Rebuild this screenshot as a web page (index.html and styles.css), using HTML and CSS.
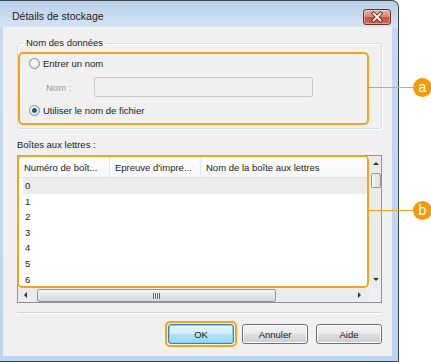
FILE: index.html
```html
<!DOCTYPE html>
<html lang="fr">
<head>
  <meta charset="UTF-8">
  <title>Détails de stockage</title>
  <link rel="stylesheet" href="styles.css">
</head>
<body>

<div class="window">
  <div class="titlebar">
    <span class="title">Détails de stockage</span>
    <button class="close" aria-label="Fermer">
      <svg width="26" height="14" viewBox="0 0 26 14">
        <path d="M9.5 3.5l7 7m0-7l-7 7" stroke="#5a2a22" stroke-width="3.6" stroke-linecap="square" fill="none"/>
        <path d="M9.5 3.5l7 7m0-7l-7 7" stroke="#ffffff" stroke-width="1.8" stroke-linecap="square" fill="none"/>
      </svg>
    </button>
  </div>

  <div class="client">
    <fieldset class="group">
      <legend>Nom des données</legend>
      <div class="callout name-options">
        <div class="option"><span class="radio"></span>Entrer un nom</div>
        <div class="name-row">
          <span class="name-label">Nom :</span>
          <span class="edit"></span>
        </div>
        <div class="option"><span class="radio checked"></span>Utiliser le nom de fichier</div>
      </div>
    </fieldset>

    <div class="list-label">Boîtes aux lettres :</div>

    <div class="listview">
      <div class="list-body callout">
        <div class="list-head">
          <span class="col col-num">Numéro de boît...</span>
          <span class="col col-proof">Epreuve d'impre...</span>
          <span class="col col-name">Nom de la boîte aux lettres</span>
        </div>
        <ul class="rows">
          <li class="hot">0</li>
          <li>1</li>
          <li>2</li>
          <li>3</li>
          <li>4</li>
          <li>5</li>
          <li>6</li>
        </ul>
      </div>
      <div class="vscroll">
        <span class="arrow"><i class="tri up"></i></span>
        <span class="thumb"></span>
        <span class="arrow bottom"><i class="tri down"></i></span>
      </div>
      <div class="hscroll">
        <span class="arrow"><i class="tri left"></i></span>
        <span class="thumb"><i class="grip"></i></span>
        <span class="arrow right-end"><i class="tri right"></i></span>
      </div>
      <div class="corner"></div>
    </div>

    <div class="divider"></div>

    <div class="actions">
      <span class="focus-ring"><button class="btn default">OK</button></span>
      <button class="btn">Annuler</button>
      <button class="btn">Aide</button>
    </div>
  </div>
</div>

<!-- callout markers drawn over the screenshot -->
<div class="marker marker-a"><span class="lead"></span><span class="badge">a</span></div>
<div class="marker marker-b"><span class="lead"></span><span class="badge">b</span></div>

</body>
</html>
```

FILE: styles.css
```css
body {
  margin: 0;
  width: 431px;
  height: 362px;
  overflow: hidden;
  background-color: #fff;
  font-family: "Liberation Sans", Arial, sans-serif;
  font-size: 9.5px;
  color: #1a1a1a;
  position: relative;
}

.window {
  box-sizing: border-box;
  width: 399px;
  height: 362px;
  display: flex;
  flex-direction: column;
  padding: 0 6px 5px 3px;
  border: 1px solid #3a4450;
  border-left: none;
  border-radius: 0 7px 0 0;
  background: linear-gradient(to bottom, #b8cee7 0, #d6e4f3 26px, #c4d9ef 27px, #bed5ee 100%);
}

.titlebar {
  height: 26px;
  display: flex;
  justify-content: space-between;
  align-items: flex-start;
  padding-left: 9px;
}

.title {
  margin-top: 9px;
  font-size: 10.5px;
  line-height: 13px;
  color: #1e1e1e;
}

.close {
  margin: 8px 1px 0 0;
  padding: 0;
  width: 28px;
  height: 16px;
  border: 1px solid #6a3228;
  border-radius: 3px;
  background: linear-gradient(to bottom, #e9b0a4 0, #d98c7c 45%, #c9533d 55%, #cf6a52 100%);
  box-shadow: inset 0 0 0 1px rgba(255, 255, 255, 0.35);
  display: flex;
  align-items: center;
  justify-content: center;
}

.client {
  flex: 1;
  background-color: #f0f0f0;
  padding: 10px 10px 0 14px;
}

/* group box */

.group {
  margin: 0;
  padding: 0 12px 3px 0;
  border: 1px solid #d5dfe5;
  border-radius: 3px;
  box-shadow: inset 1px 1px 0 #fff, 1px 1px 0 #fff;
}

.group legend {
  margin-left: 5px;
  padding: 0 3px;
  line-height: 12px;
}

.callout {
  border: 2px solid #f5a31a;
  border-radius: 5px;
}

.name-options {
  margin-top: 3px;
  padding: 2px 0 6px 9px;
  display: flex;
  flex-direction: column;
}

.option {
  height: 14px;
  display: flex;
  align-items: center;
  gap: 3px;
}

.radio {
  box-sizing: border-box;
  width: 11px;
  height: 11px;
  border-radius: 50%;
  border: 1px solid #8c8c8c;
  background: radial-gradient(circle at 40% 35%, #ffffff 0, #ececec 55%, #cfcfcf 100%);
  display: flex;
  align-items: center;
  justify-content: center;
}

.radio.checked::after {
  content: "";
  width: 5px;
  height: 5px;
  border-radius: 50%;
  background: radial-gradient(circle at 45% 40%, #2a5f9e 0, #1c4a85 45%, #6fb4e6 100%);
}

.name-row {
  height: 20px;
  margin: 7px 0 6px;
  display: flex;
  align-items: center;
  padding-left: 17px;
}

.name-label {
  width: 48px;
  color: #9a9a9a;
}

.edit {
  box-sizing: border-box;
  width: 219px;
  height: 20px;
  border: 1px solid #c9c9c9;
  border-radius: 2px;
  background-color: #f0f0f0;
}

/* list view */

.list-label {
  margin-top: 10px;
  line-height: 12px;
}

.listview {
  box-sizing: border-box;
  margin-top: 4px;
  height: 148px;
  border: 1px solid #8e9499;
  background-color: #fff;
  display: grid;
  grid-template-columns: 1fr 12px;
  grid-template-rows: 1fr 14px;
}

.list-body {
  margin: -1px 0 0 -1px;
  overflow: hidden;
  background-color: #fff;
}

.list-head {
  box-sizing: border-box;
  height: 21px;
  display: flex;
  background: linear-gradient(to bottom, #ffffff, #f6f7f9);
  border-bottom: 1px solid #e2e3e5;
}

.col {
  box-sizing: border-box;
  padding: 2px 0 0 5px;
  line-height: 17px;
  white-space: nowrap;
  color: #222;
}

.col-num,
.col-proof {
  width: 91px;
  border-right: 1px solid #e3e6ea;
}

.col-name {
  flex: 1;
}

.rows {
  list-style: none;
  margin: 0;
  padding: 0;
}

.rows li {
  margin-left: 4px;
  padding-left: 2px;
  height: 15.6px;
  line-height: 15.6px;
}

.rows li.hot {
  background-color: #ececec;
}

.vscroll,
.hscroll {
  display: flex;
  background-color: #ebebeb;
}

.vscroll {
  flex-direction: column;
  border-left: 1px solid #f2f2f2;
}

.arrow {
  flex: 0 0 14px;
  display: flex;
  align-items: center;
  justify-content: center;
}

.vscroll .bottom {
  margin-top: auto;
  flex-basis: 17px;
}

.hscroll .right-end {
  margin-left: auto;
  flex-basis: 20px;
}

.tri {
  width: 0;
  height: 0;
  border: 3px solid transparent;
}

.tri.up { border-bottom-color: #333; border-top-width: 0; }
.tri.down { border-top-color: #333; border-bottom-width: 0; }
.tri.left { border-right-color: #333; border-left-width: 0; }
.tri.right { border-left-color: #333; border-right-width: 0; }

.thumb {
  box-sizing: border-box;
  border: 1px solid #979797;
  border-radius: 2px;
  display: flex;
  align-items: center;
  justify-content: center;
}

.vscroll .thumb {
  margin: 3px 0 0 1px;
  height: 15px;
  background: linear-gradient(to right, #f4f4f4, #dedede);
}

.hscroll .thumb {
  margin: 1px 0 0 5px;
  width: 239px;
  height: 13px;
  background: linear-gradient(to bottom, #f4f4f4, #d8d8d8);
}

.grip {
  width: 7px;
  height: 6px;
  background: repeating-linear-gradient(to right, #5e5e5e 0 1px, #f6f6f6 1px 2px);
}

.corner {
  background-color: #f0f0f0;
}

/* footer */

.divider {
  margin-top: 9px;
  border-top: 1px solid #d5d5d5;
  border-bottom: 1px solid #fff;
}

.actions {
  margin-top: 7px;
  display: flex;
  justify-content: flex-end;
  align-items: center;
  gap: 8px;
}

.focus-ring {
  margin-right: -3px;
  padding: 1px;
  border: 2px solid #f5a31a;
  border-radius: 5px;
  display: flex;
}

.btn {
  box-sizing: border-box;
  width: 66px;
  height: 20px;
  padding: 0;
  font-family: "Liberation Sans", Arial, sans-serif;
  font-size: 9.5px;
  color: #1a1a1a;
  border: 1px solid #707070;
  border-radius: 3px;
  background: linear-gradient(to bottom, #f3f3f3 0, #ebebeb 48%, #dddddd 52%, #cfcfcf 100%);
  box-shadow: inset 0 0 0 1px #fbfbfb;
}

.btn.default {
  border-color: #3c7fb1;
  background: linear-gradient(to bottom, #e6f5fd 0, #d2edfb 48%, #b3e1f8 52%, #9ed7f3 100%);
  box-shadow: inset 0 0 0 1px #7fd2f7;
}

/* annotation markers */

.marker {
  position: absolute;
  left: 369px;
  display: flex;
  align-items: center;
}

.marker-a { top: 78px; }
.marker-b { top: 201px; }

.lead {
  width: 44px;
  height: 1.5px;
  background-color: #f5a31a;
}

.badge {
  width: 19px;
  height: 19px;
  border-radius: 50%;
  background-color: #f19a0a;
  color: #fff;
  font-size: 14px;
  line-height: 18px;
  text-align: center;
}
```
